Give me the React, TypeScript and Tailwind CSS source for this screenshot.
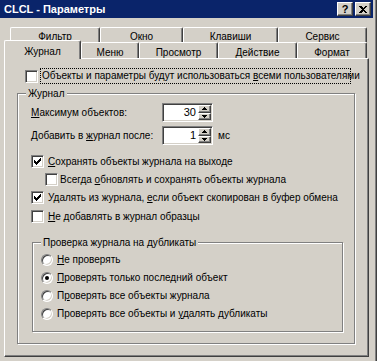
import React from 'react';

const raised =
  'border border-t-white border-l-white border-r-[#404040] border-b-[#404040] shadow-[inset_-1px_-1px_0_#808080]';

const checkPixels = [
  [0, 2], [1, 3], [2, 4], [3, 3], [4, 2], [5, 1], [6, 0],
];

function Check({ checked }: { checked?: boolean }) {
  return (
    <span className="w-[13px] h-[13px] shrink-0 bg-white border border-t-[#808080] border-l-[#808080] border-r-white border-b-white shadow-[inset_1px_1px_0_#404040,inset_-1px_-1px_0_#d4d0c8] flex items-center justify-center">
      {checked && (
        <svg width="7" height="7" viewBox="0 0 7 7" shapeRendering="crispEdges">
          {checkPixels.map(([x, y]) => (
            <rect key={x} x={x} y={y} width="1" height="3" fill="#000" />
          ))}
        </svg>
      )}
    </span>
  );
}

function Radio({ checked }: { checked?: boolean }) {
  return (
    <span className="w-[12px] h-[12px] shrink-0 rounded-full bg-white border border-t-[#808080] border-l-[#808080] border-r-white border-b-white shadow-[inset_1px_1px_0_#404040,inset_-1px_-1px_0_#d4d0c8] flex items-center justify-center">
      {checked && <span className="w-[4px] h-[4px] rounded-full bg-black" />}
    </span>
  );
}

function Spin({ value }: { value: string }) {
  return (
    <div className="w-[51px] h-[19px] flex bg-white border border-t-[#808080] border-l-[#808080] border-r-white border-b-white shadow-[inset_1px_1px_0_#404040,inset_-1px_-1px_0_#d4d0c8] p-[1px]">
      <div className="flex-1 text-right pr-[2px] leading-[15px] text-[11px]">{value}</div>
      <div className="w-[13px] flex flex-col">
        <div className={`flex-1 bg-[#d4d0c8] ${raised} flex items-center justify-center`}>
          <svg width="5" height="3" viewBox="0 0 5 3" shapeRendering="crispEdges">
            <path d="M2 0h1v1h1v1h1v1H0V2h1V1h1z" fill="#000" />
          </svg>
        </div>
        <div className={`flex-1 bg-[#d4d0c8] ${raised} flex items-center justify-center`}>
          <svg width="5" height="3" viewBox="0 0 5 3" shapeRendering="crispEdges">
            <path d="M0 0h5v1H4v1H3v1H2V2H1V1H0z" fill="#000" />
          </svg>
        </div>
      </div>
    </div>
  );
}

function Group({ label, className, children }: { label: string; className: string; children: React.ReactNode }) {
  return (
    <div className={`relative border border-[#808080] shadow-[inset_1px_1px_0_#fff,1px_1px_0_#fff] ${className}`}>
      <span className="absolute -top-[7px] left-[8px] bg-[#d4d0c8] px-[2px] leading-[13px]">{label}</span>
      {children}
    </div>
  );
}

function Tab({ label, w, selected, back }: { label: string; w: number; selected?: boolean; back?: boolean }) {
  const size = back ? 'h-[15px] pt-[2px]' : selected ? 'h-[19px] relative z-10 -mb-[1px] pt-[2px]' : 'h-[16px] pt-[3px]';
  return (
    <div
      style={{ width: w }}
      className={`${size} shrink-0 bg-[#d4d0c8] border-t border-l border-r border-t-white border-l-white border-r-[#404040] rounded-tl-[2px] rounded-tr-[2px] shadow-[inset_-1px_0_0_#808080] flex items-center justify-center`}
    >
      {label}
    </div>
  );
}

export default function App() {
  return (
    <div className="w-[377px] h-[361px] overflow-hidden bg-[#d4d0c8] text-black text-[10px] leading-[13px] whitespace-nowrap font-['Liberation_Sans',sans-serif] flex border-r border-r-[#404040] shadow-[inset_-1px_0_0_#808080]">
      <div className="w-[373px] flex flex-col">
        <div className="h-[18px] bg-[#0a246a] flex items-center pl-[4px] pr-[2px]">
          <span className="text-white font-bold text-[11px]">CLCL - Параметры</span>
          <div className="ml-auto flex gap-[2px]">
            <div className={`w-[16px] h-[14px] bg-[#d4d0c8] ${raised} flex items-center justify-center font-bold text-[11px]`}>?</div>
            <div className={`w-[16px] h-[14px] bg-[#d4d0c8] ${raised} flex items-center justify-center`}>
              <svg width="8" height="7" viewBox="0 0 8 7" shapeRendering="crispEdges">
                <path d="M0 0h2l2 2 2-2h2L5 3.5 8 7H6L4 5 2 7H0l3-3.5z" fill="#000" />
              </svg>
            </div>
          </div>
        </div>

        <div className="flex-1 flex flex-col pl-[4px] pt-[9px]">
          <div className="flex pl-[6px]">
            <Tab label="Фильтр" w={90} back />
            <Tab label="Окно" w={83} back />
            <Tab label="Клавиши" w={95} back />
            <Tab label="Сервис" w={89} back />
          </div>
          <div className="flex items-end h-[18px] -mt-[2px]">
            <Tab label="Журнал" w={77} selected />
            <Tab label="Меню" w={58} />
            <Tab label="Просмотр" w={79} />
            <Tab label="Действие" w={79} />
            <Tab label="Формат" w={70} />
          </div>

          <div className="w-[365px] h-[299px] border border-t-white border-l-white border-r-[#404040] border-b-[#404040] shadow-[inset_-1px_-1px_0_#808080] flex flex-col">
            <div className="mt-[9px] ml-[20px] flex items-center h-[16px]">
              <Check />
              <span className="ml-[2px] w-[311px] h-[16px] border border-dotted border-black pl-[1px] leading-[14px]">
                Объекты и параметры будут использоваться <u>в</u>семи пользователями
              </span>
            </div>

            <Group label="Журнал" className="mt-[9px] ml-[12px] w-[338px] h-[251px] flex flex-col">
              <div className="mt-[9px] ml-[13px] flex items-center">
                <span className="w-[131px]"><u>М</u>аксимум объектов:</span>
                <Spin value="30" />
              </div>
              <div className="mt-[4px] ml-[13px] flex items-center">
                <span className="w-[131px]">Добавить в <u>ж</u>урнал после:</span>
                <Spin value="1" />
                <span className="ml-[5px]">мс</span>
              </div>
              <div className="mt-[10px] ml-[13px] flex items-center gap-[4px]">
                <Check checked />
                <span><u>С</u>охранять объекты журнала на выходе</span>
              </div>
              <div className="mt-[5px] ml-[27px] flex items-center gap-[2px]">
                <Check />
                <span>Всегда <u>о</u>бновлять и сохранять объекты журнала</span>
              </div>
              <div className="mt-[5px] ml-[13px] flex items-center gap-[4px]">
                <Check checked />
                <span>Удалять из журнала, <u>е</u>сли объект скопирован в буфер обмена</span>
              </div>
              <div className="mt-[6px] ml-[13px] flex items-center gap-[4px]">
                <Check />
                <span><u>Н</u>е добавлять в журнал образцы</span>
              </div>

              <Group label="Проверка журнала на дубликаты" className="mt-[19px] ml-[14px] w-[311px] h-[90px] flex flex-col">
                <div className="mt-[10px] ml-[8px] flex items-center gap-[4px]">
                  <Radio />
                  <span><u>Н</u>е проверять</span>
                </div>
                <div className="mt-[5px] ml-[8px] flex items-center gap-[4px]">
                  <Radio checked />
                  <span><u>П</u>роверять только последний объект</span>
                </div>
                <div className="mt-[5px] ml-[8px] flex items-center gap-[4px]">
                  <Radio />
                  <span>П<u>р</u>оверять все объекты журнала</span>
                </div>
                <div className="mt-[5px] ml-[8px] flex items-center gap-[4px]">
                  <Radio />
                  <span>Проверять все объекты и <u>у</u>далять дубликаты</span>
                </div>
              </Group>
            </Group>
          </div>
        </div>
      </div>
    </div>
  );
}
